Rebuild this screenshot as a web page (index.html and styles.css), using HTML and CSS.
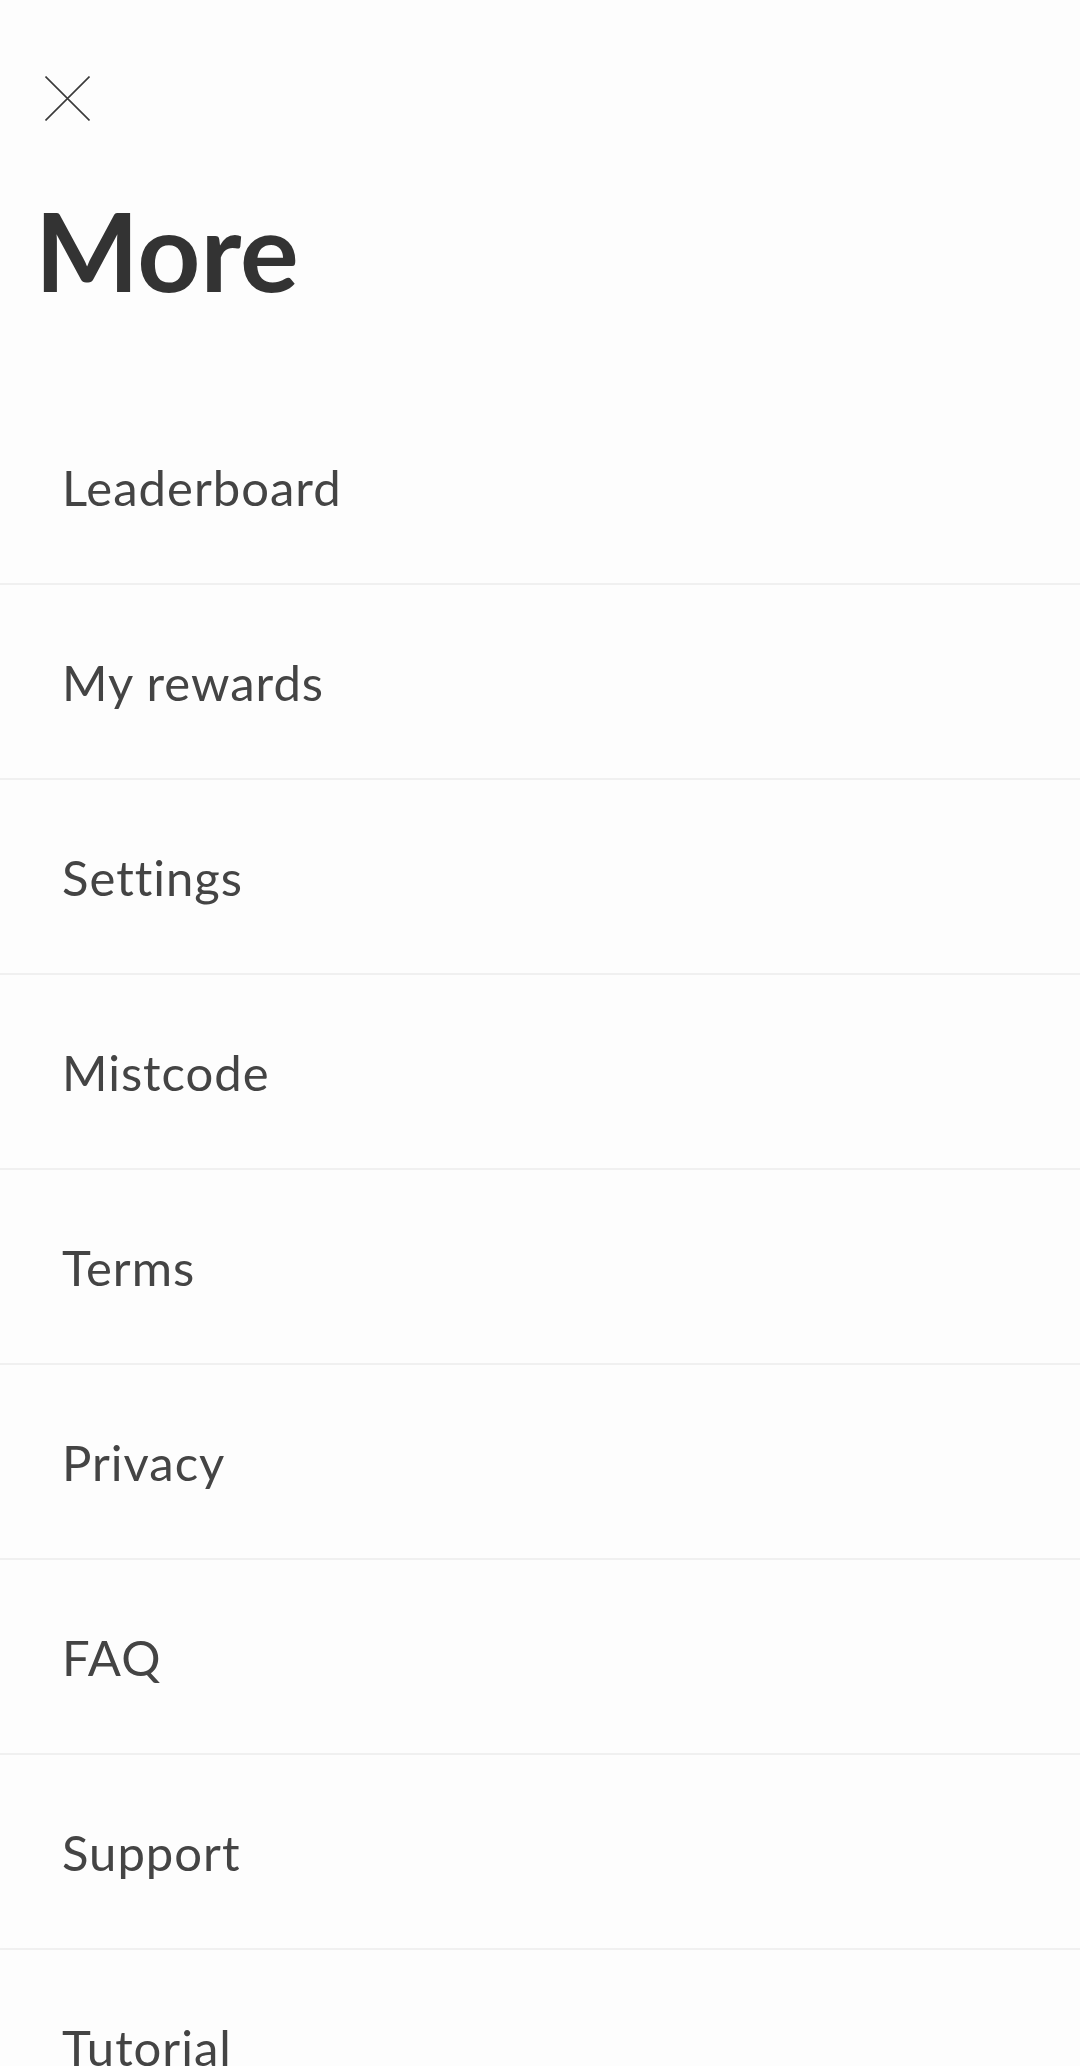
FILE: index.html
```
<!DOCTYPE html>
<html>
<head>
<meta charset="utf-8">
<link rel="stylesheet" href="styles.css">
</head>
<body>
<div class="page">
  <header class="head">
    <button class="close" aria-label="Close">
      <svg width="45" height="45" viewBox="0 0 45 45"><path d="M0.5 0.5 L44.5 44.5 M44.5 0.5 L0.5 44.5" stroke="#3a3a3a" stroke-width="1.6" fill="none"/></svg>
    </button>
    <h1 class="title">More</h1>
  </header>
  <ul class="menu">
    <li class="item">Leaderboard</li>
    <li class="item">My rewards</li>
    <li class="item">Settings</li>
    <li class="item">Mistcode</li>
    <li class="item">Terms</li>
    <li class="item">Privacy</li>
    <li class="item">FAQ</li>
    <li class="item">Support</li>
    <li class="item">Tutorial</li>
  </ul>
</div>
</body>
</html>
```
FILE: styles.css
```
html, body {
  margin: 0;
  padding: 0;
  background: #fdfdfd;
}
body {
  font-family: Lato, "Noto Sans", sans-serif;
  font-variant-ligatures: none;
  color: #444;
  overflow: hidden;
  height: 2066px;
}
.page {
  width: 1080px;
}
.head {
  padding: 76px 0 0 45px;
}
.close {
  display: block;
  width: 45px;
  height: 45px;
  padding: 0;
  border: 0;
  background: none;
}
.close svg { display: block; }
.title {
  margin: 72px 0 0 -10px;
  font-size: 110px;
  line-height: 112px;
  font-weight: 700;
  color: #333;
}
.menu {
  list-style: none;
  margin: 85px 0 0;
  padding: 0;
}
.item {
  height: 193px;
  border-bottom: 2px solid #f0f0f0;
  display: flex;
  align-items: center;
  padding-left: 62px;
  font-size: 49px;
  line-height: 52px;
  letter-spacing: 1px;
  color: #444;
}
```
